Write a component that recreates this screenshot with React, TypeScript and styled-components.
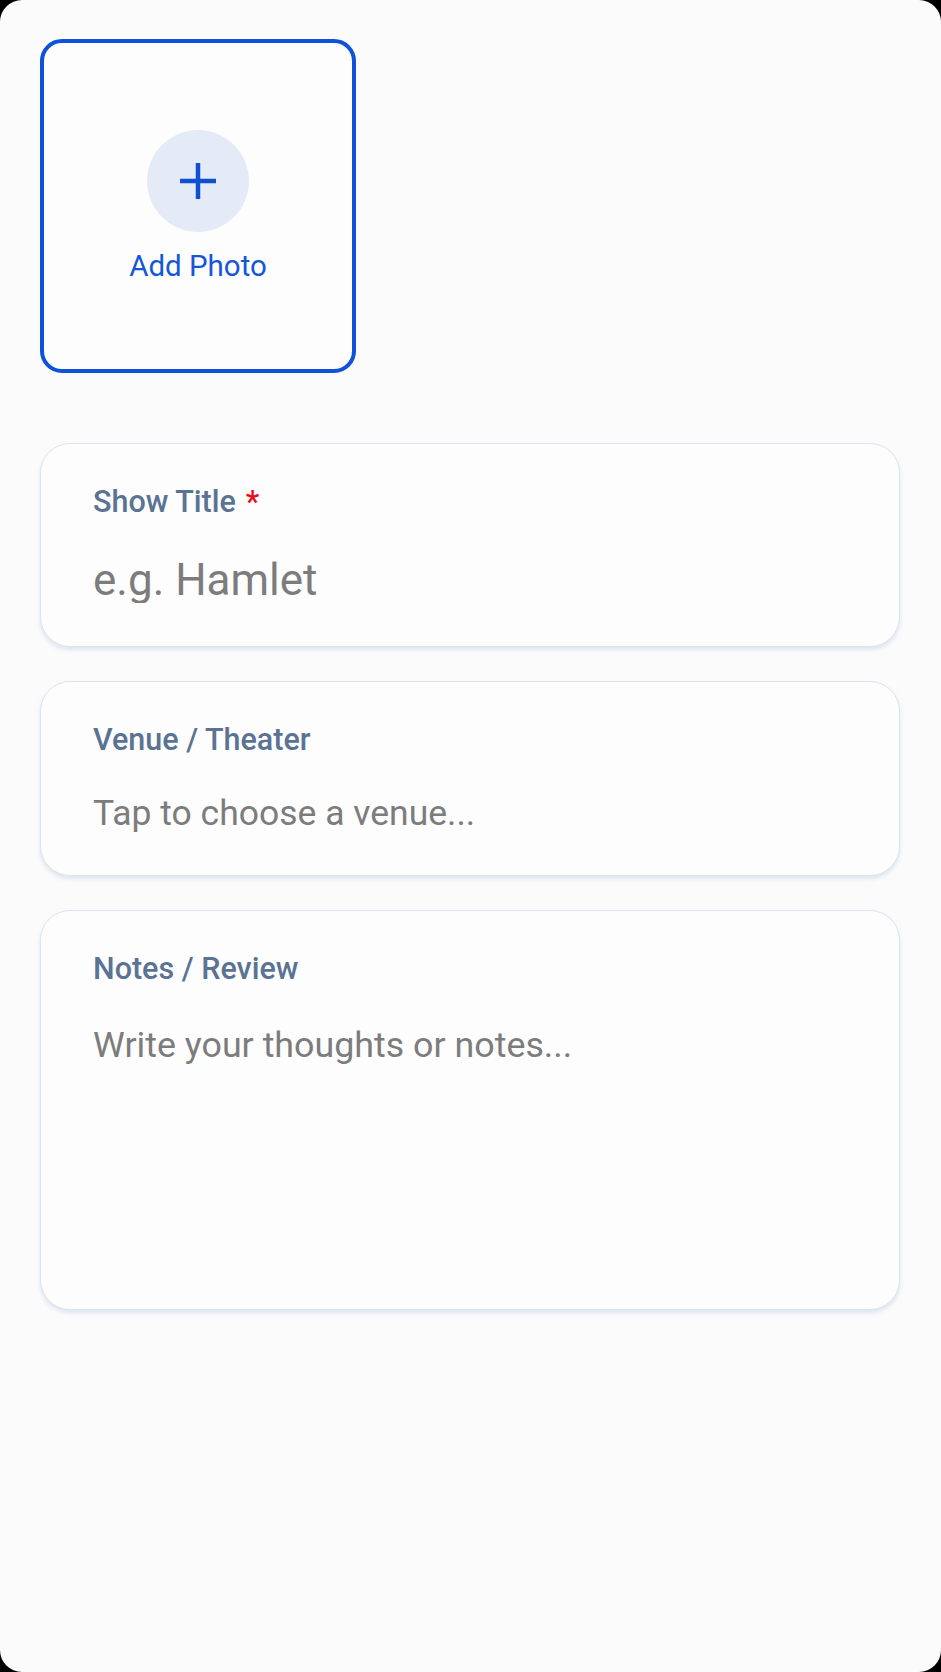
import * as React from "react";
import styled, { createGlobalStyle } from "styled-components";

const GlobalStyle = createGlobalStyle`
  html, body {
    margin: 0;
    padding: 0;
    background: #000;
  }
  * {
    box-sizing: border-box;
  }
`;

const Screen = styled.div`
  width: 941px;
  height: 1672px;
  background: #fbfbfc;
  border-radius: 22px;
  overflow: hidden;
  padding: 39px 41px 0 40px;
  display: flex;
  flex-direction: column;
  font-family: Roboto, "Liberation Sans", sans-serif;
`;

const PhotoButton = styled.button`
  width: 316px;
  height: 334px;
  border: 4px solid #0d52d9;
  border-radius: 22px;
  background: #fdfdfe;
  display: flex;
  flex-direction: column;
  align-items: center;
  justify-content: center;
  gap: 20px;
  padding: 0;
  margin-bottom: 70px;
  cursor: pointer;
  font-family: inherit;
`;

const PlusCircle = styled.div`
  width: 102px;
  height: 102px;
  border-radius: 50%;
  background: #e4ebf7;
  display: flex;
  align-items: center;
  justify-content: center;
`;

const PhotoLabel = styled.span`
  font-size: 29.5px;
  line-height: 1;
  color: #1656d8;
  font-weight: 400;
`;

const Form = styled.div`
  display: flex;
  flex-direction: column;
  gap: 34px;
`;

const Field = styled.label<{ $height?: number }>`
  display: flex;
  flex-direction: column;
  gap: 40px;
  padding: 43px 52px 43px;
  background: #fdfdfe;
  border: 1.5px solid #dbe4f0;
  border-radius: 30px;
  box-shadow: 0 3px 4px rgba(170, 188, 215, 0.35);
  height: ${(p) => (p.$height ? `${p.$height}px` : "auto")};
`;

const Label = styled.span`
  font-size: 30.5px;
  line-height: 1;
  font-weight: 500;
  color: #5b7393;
`;

const Required = styled.span`
  color: #e8101a;
  margin-left: 10px;
`;

const TextInput = styled.input<{ $size: number }>`
  border: none;
  outline: none;
  background: transparent;
  padding: 0;
  font-family: inherit;
  font-size: ${(p) => p.$size}px;
  line-height: 1;
  height: ${(p) => p.$size + 1}px;
  color: #333;
  &::placeholder {
    color: #7c7c7c;
  }
`;

const TextArea = styled.textarea`
  flex: 1;
  border: none;
  outline: none;
  background: transparent;
  padding: 0;
  resize: none;
  font-family: inherit;
  font-size: 35.8px;
  line-height: 1.2;
  color: #333;
  &::placeholder {
    color: #7c7c7c;
  }
`;

export default function App() {
  return (
    <>
      <GlobalStyle />
      <Screen>
        <PhotoButton type="button">
          <PlusCircle>
            <svg width="38" height="38" viewBox="0 0 38 38">
              <path d="M19 1v36M1 19h36" stroke="#0f4fd0" strokeWidth="4.5" />
            </svg>
          </PlusCircle>
          <PhotoLabel>Add Photo</PhotoLabel>
        </PhotoButton>
        <Form>
          <Field>
            <Label>
              Show Title<Required>*</Required>
            </Label>
            <TextInput $size={44} placeholder="e.g. Hamlet" />
          </Field>
          <Field>
            <Label>Venue / Theater</Label>
            <TextInput $size={35.5} placeholder="Tap to choose a venue..." readOnly />
          </Field>
          <Field $height={400}>
            <Label>Notes / Review</Label>
            <TextArea placeholder="Write your thoughts or notes..." />
          </Field>
        </Form>
      </Screen>
    </>
  );
}
